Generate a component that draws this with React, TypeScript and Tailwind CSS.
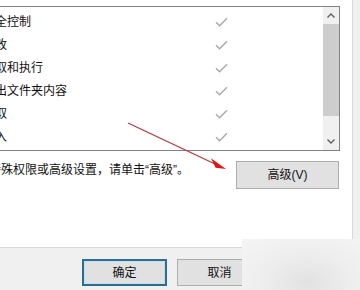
import React from "react";

const rows = ["完全控制", "修改", "读取和执行", "列出文件夹内容", "读取", "写入"];

function Check() {
  return (
    <svg width="13" height="10" viewBox="0 0 13 10" className="shrink-0">
      <path d="M1 5.2L4.6 8.8L12 1.2" fill="none" stroke="#a8a8a8" strokeWidth={1.4} />
    </svg>
  );
}

function Chevron({ up }: { up?: boolean }) {
  return (
    <svg width="8" height="5" viewBox="0 0 8 5">
      <path
        d={up ? "M0.5 4.5L4 1L7.5 4.5" : "M0.5 0.5L4 4L7.5 0.5"}
        fill="none"
        stroke="#606060"
        strokeWidth={1.4}
      />
    </svg>
  );
}

export default function App() {
  return (
    <div className="relative w-[360px] h-[290px] overflow-hidden bg-[#f0f0f0] text-[12px] text-[#111] font-['Liberation_Sans','Noto_Sans_CJK_SC',sans-serif]">
      {/* tab page */}
      <div className="w-[353px] h-[248px] bg-white border-r border-b border-[#d9d9d9] pt-[6px]">
        <div className="flex w-[341px] h-[145px] -ml-px border border-[#828282] bg-white">
          <div className="flex-1 flex flex-col pt-[3px]">
            {rows.map((r) => (
              <div key={r} className="flex items-center h-[23px]">
                <span className="-ml-[17px] w-[232px] shrink-0 whitespace-nowrap leading-[16px]">
                  {r}
                </span>
                <Check />
              </div>
            ))}
          </div>
          <div className="w-[16px] flex flex-col bg-[#f0f0f0]">
            <div className="h-[17px] flex items-center justify-center">
              <Chevron up />
            </div>
            <div className="h-[92px] bg-[#cdcdcd]" />
            <div className="flex-1" />
            <div className="h-[17px] flex items-center justify-center">
              <Chevron />
            </div>
          </div>
        </div>

        <div className="flex mt-[10px]">
          <span className="-ml-[11px] w-[247px] shrink-0 mt-px leading-[16px] whitespace-nowrap">
            特殊权限或高级设置，请单击“高级”。
          </span>
          <button className="w-[103px] h-[28px] bg-[#e1e1e1] border border-[#adadad] flex items-center justify-center leading-none">
            高级(V)
          </button>
        </div>
      </div>

      {/* dialog buttons */}
      <div className="flex gap-[10px] pl-[82px] pt-[11px]">
        <button className="w-[85px] h-[27px] bg-[#e1e1e1] border-2 border-[#2e6e8c] shadow-[inset_0_0_0_1px_#bfe0f2] flex items-center justify-center leading-none">
          确定
        </button>
        <button className="w-[85px] h-[27px] bg-[#e1e1e1] border border-[#adadad] flex items-center justify-center leading-none">
          取消
        </button>
      </div>

      {/* red annotation arrow */}
      <svg className="absolute inset-0 pointer-events-none" width="360" height="290" viewBox="0 0 360 290">
        <line x1="128" y1="123" x2="214" y2="163.5" stroke="#b23a3a" strokeWidth={1.3} />
        <path d="M226 169L211 158.3L215.6 167.8Z" fill="#e01515" />
      </svg>

      {/* blurred watermark patch */}
      <div className="absolute left-[242px] top-[239px] right-0 bottom-0 bg-[radial-gradient(ellipse_at_55%_85%,#e2e2e2_0%,#ededed_45%,#f5f5f5_100%)]" />
    </div>
  );
}
